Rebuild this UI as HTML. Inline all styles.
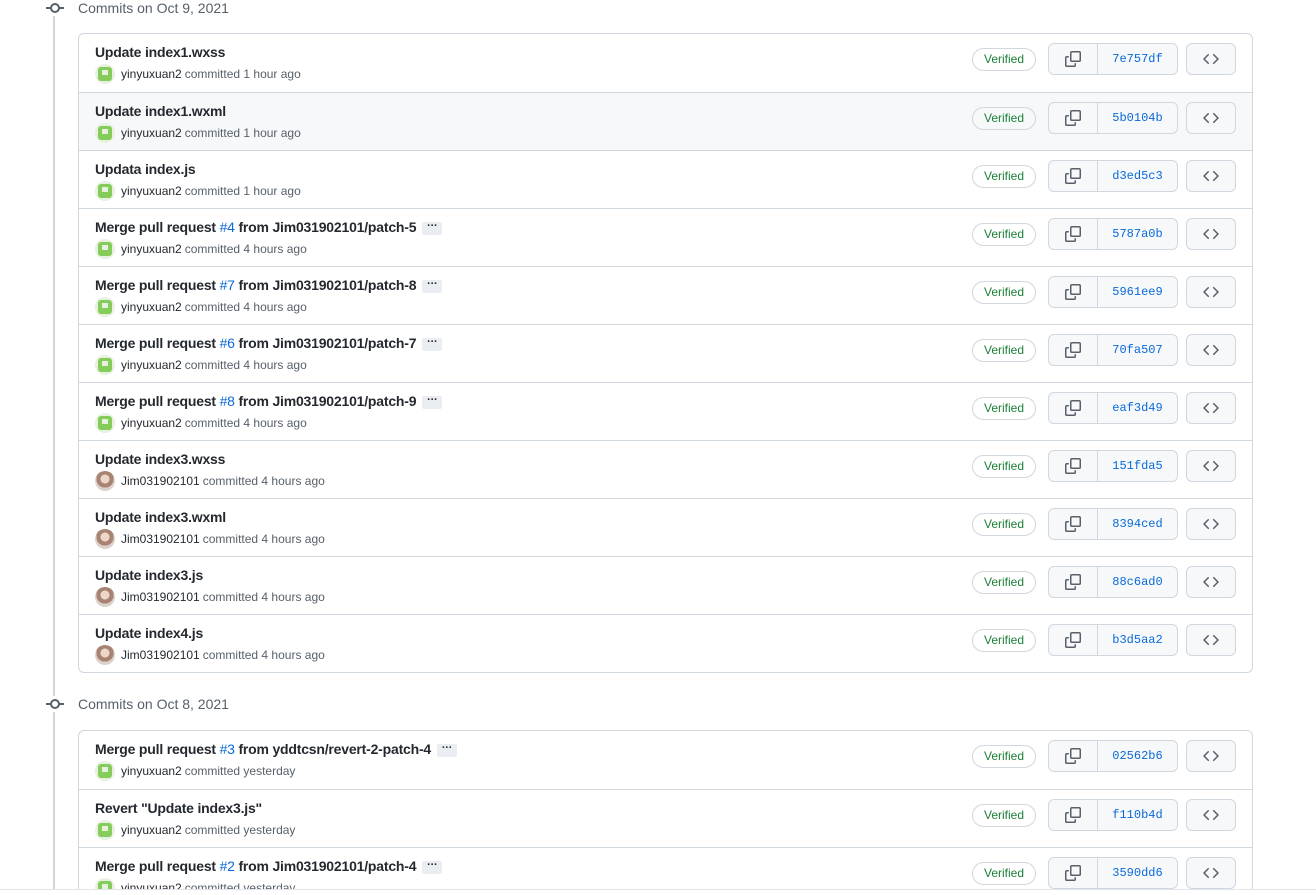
<!DOCTYPE html>
<html style="width:1316px;height:895px;overflow:hidden"><head><meta charset="utf-8"><style>
*{box-sizing:border-box;margin:0;padding:0}
body{width:1316px;height:895px;overflow:hidden;background:#fff;font-family:"Liberation Sans",Arial,sans-serif;color:#24292f;position:relative}
.line{position:absolute;left:53px;top:14px;width:2px;height:875px;background:#d0d7de}
.hdr{position:absolute;left:44px;height:16px;font-size:14px;color:#57606a;display:flex;align-items:center}
.hdr .ic{width:22px;height:16px;position:relative;background:#fff;margin-right:12px}
.hdr .ic:before{content:"";position:absolute;left:2px;top:7px;width:18px;height:2px;background:#57606a}
.hdr .ic:after{content:"";position:absolute;left:6px;top:3px;width:6px;height:6px;border:2px solid #57606a;border-radius:50%;background:#fff}
.box{position:absolute;left:78px;width:1175px;border:1px solid #d0d7de;border-radius:6px;overflow:hidden;background:#fff}
.row{height:58px;border-top:1px solid #d0d7de;position:relative}
.row:first-child{border-top:none}
.row.hl{background:#f6f8fa}
.t{position:absolute;left:16px;top:10px;font-size:14px;font-weight:600;letter-spacing:-.2px}
.t a{color:#0969da;font-weight:400}
.dots{display:inline-block;background:#eaeef2;border-radius:2px;width:20px;height:13px;line-height:8px;font-size:11px;text-align:center;vertical-align:middle;margin-left:6px;color:#24292f;font-weight:700}
.m{position:absolute;left:16px;top:30px;font-size:12px;color:#57606a;display:flex;align-items:center}
.m b{color:#24292f;font-weight:400;margin-right:3px}
.av{width:20px;height:20px;border-radius:50%;margin-right:6px;overflow:hidden}
.g{background:#e6f1df;position:relative}
.g:before{content:"";position:absolute;left:3px;top:3px;width:14px;height:14px;background:#85cc5a;border-radius:3px}
.g:after{content:"";position:absolute;left:7px;top:6px;width:6px;height:5px;background:#e6f1df}
.j{background:radial-gradient(circle at 50% 40%,#ecd7c8 0 28%,#a88272 29% 55%,#ddd2cb 56%)}
.ver{position:absolute;left:893px;top:14px;width:64px;height:23px;border:1px solid #d0d7de;border-radius:12px;font-size:12px;color:#1a7f37;text-align:center;line-height:21px}
.cp{position:absolute;left:969px;top:9px;width:130px;height:32px;border:1px solid #d0d7de;border-radius:6px;background:#f6f8fa;display:flex}
.cp .c{width:49px;border-right:1px solid #d0d7de;display:flex;align-items:center;justify-content:center}
.cp .h{flex:1;font-family:"Liberation Mono",monospace;font-size:12px;color:#0969da;text-align:center;line-height:30px}
.br{position:absolute;left:1107px;top:9px;width:50px;height:32px;border:1px solid #d0d7de;border-radius:6px;background:#f6f8fa;display:flex;align-items:center;justify-content:center}
.foot{position:absolute;left:0;top:889px;width:1316px;height:6px;background:#fff;border-top:1px solid #e1e4e8}
</style></head><body>
<div class="line"></div>
<div class="hdr" style="top:0"><span class="ic"></span>Commits on Oct 9, 2021</div>
<div class="box" style="top:33px">
<div class="row"><div class="t">Update index1.wxss</div><div class="m"><span class="av g"></span><b>yinyuxuan2</b>committed 1 hour ago</div><div class="ver">Verified</div><div class="cp"><span class="c"><svg width="16" height="16" viewBox="0 0 16 16" fill="#57606a"><path d="M0 6.75C0 5.78.78 5 1.75 5h1.5a.75.75 0 010 1.5h-1.5a.25.25 0 00-.25.25v7.5c0 .14.11.25.25.25h7.5a.25.25 0 00.25-.25v-1.5a.75.75 0 011.5 0v1.5A1.750 1.75 0 019.25 16h-7.5A1.75 1.75 0 010 14.25v-7.5z"/><path d="M5 1.75C5 .78 5.78 0 6.75 0h7.5C15.22 0 16 .78 16 1.75v7.5A1.75 1.75 0 0114.25 11h-7.5A1.75 1.75 0 015 9.25v-7.5zm1.75-.25a.25.25 0 00-.25.25v7.5c0 .14.11.25.25.25h7.5a.25.25 0 00.25-.25v-7.5a.25.25 0 00-.25-.25h-7.5z"/></svg></span><span class="h">7e757df</span></div><div class="br"><svg width="16" height="16" viewBox="0 0 16 16" fill="#57606a"><path d="M4.72 3.22a.75.75 0 011.06 1.06L2.06 8l3.72 3.72a.75.75 0 11-1.06 1.06L.47 8.53a.75.75 0 010-1.06l4.25-4.25zm6.56 0a.75.75 0 10-1.06 1.06L13.94 8l-3.72 3.72a.75.75 0 101.06 1.06l4.25-4.25a.75.75 0 000-1.06l-4.25-4.25z"/></svg></div></div>
</div>
<div class="hdr" style="top:696px"><span class="ic"></span>Commits on Oct 8, 2021</div>
<div class="box" style="top:730px;height:175px"></div>
<div class="foot"></div>
<script>
const copy=document.querySelector('.cp .c').innerHTML, brw=document.querySelector('.br').innerHTML;
function row(t,who,when,hash,hl){const g=who=='yinyuxuan2';return `<div class="row${hl?' hl':''}"><div class="t">${t}</div><div class="m"><span class="av ${g?'g':'j'}"></span><b>${who}</b>committed ${when}</div><div class="ver">Verified</div><div class="cp"><span class="c">${copy}</span><span class="h">${hash}</span></div><div class="br">${brw}</div></div>`}
const mp=(n,b)=>`Merge pull request <a>#${n}</a> from ${b}<span class="dots">···</span>`;
const Y='yinyuxuan2',J='Jim031902101',h1='1 hour ago',h4='4 hours ago';
const a=[['Update index1.wxss',Y,h1,'7e757df'],['Update index1.wxml',Y,h1,'5b0104b',1],['Updata index.js',Y,h1,'d3ed5c3'],[mp(4,'Jim031902101/patch-5'),Y,h4,'5787a0b'],[mp(7,'Jim031902101/patch-8'),Y,h4,'5961ee9'],[mp(6,'Jim031902101/patch-7'),Y,h4,'70fa507'],[mp(8,'Jim031902101/patch-9'),Y,h4,'eaf3d49'],['Update index3.wxss',J,h4,'151fda5'],['Update index3.wxml',J,h4,'8394ced'],['Update index3.js',J,h4,'88c6ad0'],['Update index4.js',J,h4,'b3d5aa2']];
const b=[[mp(3,'yddtcsn/revert-2-patch-4'),Y,'yesterday','02562b6'],['Revert "Update index3.js"',Y,'yesterday','f110b4d'],[mp(2,'Jim031902101/patch-4'),Y,'yesterday','3590dd6']];
const bx=document.querySelectorAll('.box');
bx[0].innerHTML=a.map(r=>row(...r)).join('');
bx[1].innerHTML=b.map(r=>row(...r)).join('');
</script>
</body></html>
